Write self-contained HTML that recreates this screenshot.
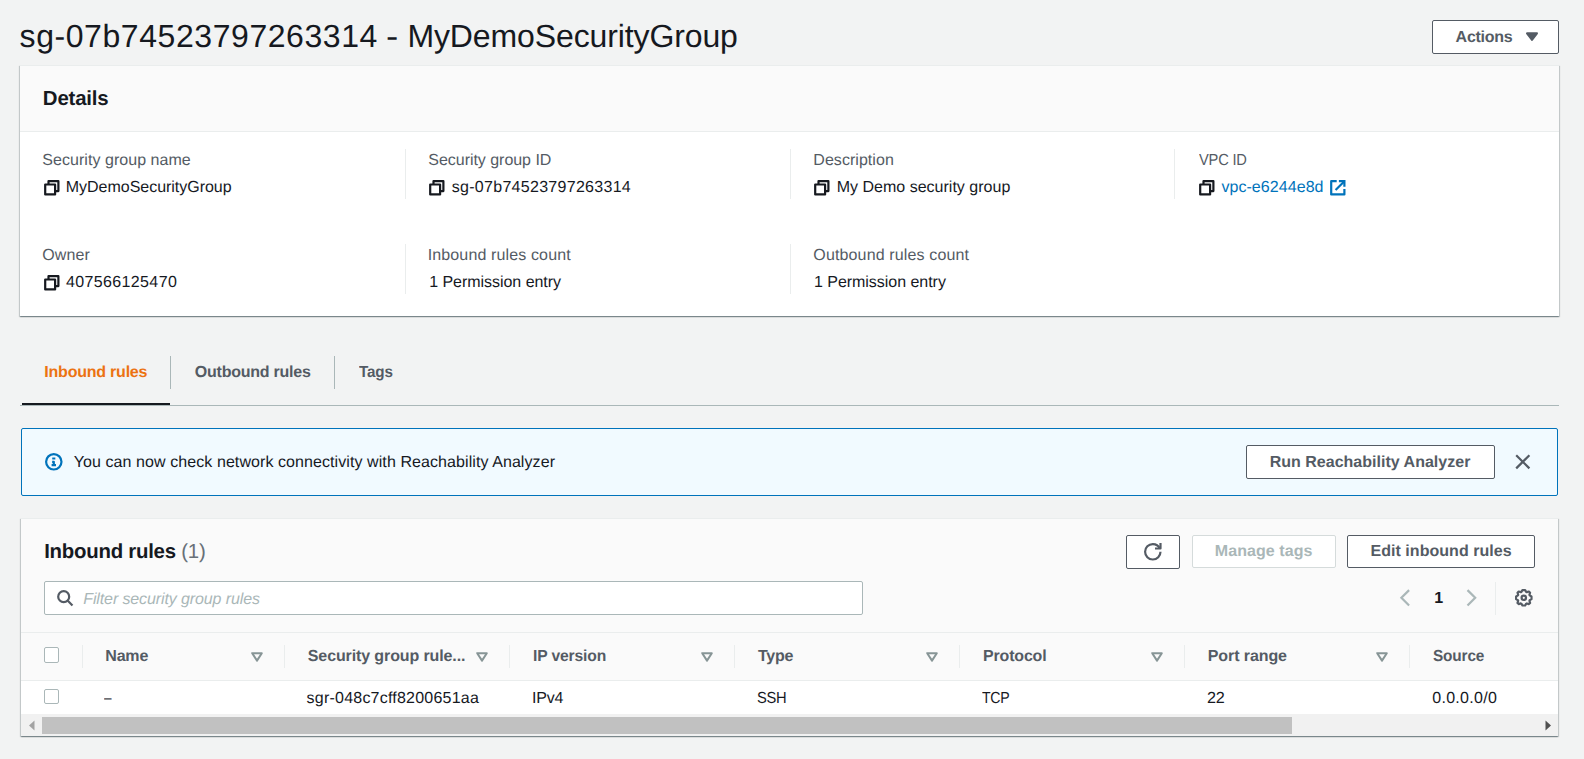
<!DOCTYPE html>
<html lang="en">
<head>
<meta charset="utf-8">
<title>sg-07b74523797263314 - MyDemoSecurityGroup</title>
<style>
*{box-sizing:border-box;margin:0;padding:0}
html,body{width:1584px;height:759px;overflow:hidden;background:#f2f3f3}
body{font-family:"Liberation Sans",sans-serif;color:#16191f;font-size:16px;position:relative;text-rendering:geometricPrecision}
.t{position:absolute;white-space:nowrap;display:block;text-decoration:none;font-size:16px;line-height:20px;height:20px;font-weight:normal;color:#16191f}
.box{position:absolute}
.card{position:absolute;background:#fff;border-top:1px solid #eaeded;box-shadow:0 1px 1px 0 rgba(0,28,36,.3),1px 1px 1px 0 rgba(0,28,36,.15),-1px 1px 1px 0 rgba(0,28,36,.15)}
.btn{position:absolute;border:1px solid #545b64;border-radius:2px;background:#fff}
.btn.dis{border-color:#d5dbdb}
.vsep{position:absolute;width:1px;background:#eaeded}
.cb{position:absolute;width:15px;height:15px;border:1px solid #aab7b8;border-radius:2px;background:#fff}
svg{position:absolute;overflow:visible}
.ic{fill:none;stroke:#16191f;stroke-width:2;stroke-linejoin:round}
</style>
</head>
<body>

<!-- ============ Page header ============ -->
<h1><span class="t" style="left:19.62px;top:18px;font-size:32px;line-height:36px;height:36px;letter-spacing:0.566px">sg-07b74523797263314</span> <span class="t" style="left:386.10px;top:18px;font-size:32px;line-height:36px;height:36px;transform:scaleX(1.150);transform-origin:0 50%">-</span> <span class="t" style="left:407.46px;top:18px;font-size:32px;line-height:36px;height:36px;letter-spacing:-0.119px">MyDemoSecurityGroup</span></h1>
<div class="btn" style="left:1432px;top:20px;width:127px;height:34px"></div>
<span class="t" style="left:1455.62px;top:28px;color:#545b64;letter-spacing:-0.282px;font-weight:bold">Actions</span>
<svg style="left:1525px;top:31px" width="14" height="12" viewBox="0 0 14 12"><path d="M2 2.3h10L7 8.9z" fill="#545b64" stroke="#545b64" stroke-width="2" stroke-linejoin="round"/></svg>

<!-- ============ Details card ============ -->
<div class="card" style="left:20px;top:65px;width:1539px;height:251px"></div>
<div class="box" style="left:20px;top:66px;width:1539px;height:66px;background:#fafafa;border-bottom:1px solid #eaeded"></div>
<h2 class="t" style="left:42.86px;top:87px;font-size:20.4px;line-height:24px;height:24px;letter-spacing:-0.194px;font-weight:bold">Details</h2>

<div class="vsep" style="left:405px;top:149px;height:50px"></div>
<div class="vsep" style="left:790px;top:149px;height:50px"></div>
<div class="vsep" style="left:1174px;top:149px;height:50px"></div>
<div class="vsep" style="left:405px;top:244px;height:50px"></div>
<div class="vsep" style="left:790px;top:244px;height:50px"></div>

<div class="t" style="left:42.30px;top:151px;color:#545b64;letter-spacing:0.046px">Security group name</div>
<div class="t" style="left:428.30px;top:151px;color:#545b64;letter-spacing:-0.035px">Security group ID</div>
<div class="t" style="left:813.30px;top:151px;color:#545b64;letter-spacing:0.047px">Description</div>
<div class="t" style="left:1198.58px;top:151px;color:#545b64;letter-spacing:-0.200px;transform:scaleX(0.916);transform-origin:0 50%">VPC ID</div>
<div class="t" style="left:42.30px;top:246px;color:#545b64;letter-spacing:0.101px">Owner</div>
<div class="t" style="left:427.70px;top:246px;color:#545b64;letter-spacing:0.134px">Inbound rules count</div>
<div class="t" style="left:813.30px;top:246px;color:#545b64;letter-spacing:0.142px">Outbound rules count</div>

<svg class="ic" style="left:43px;top:179px" width="17.6" height="17.6" viewBox="0 0 16 16"><path d="M2 5h9v9H2z"/><path d="M5 5V2h9v9h-3"/></svg>
<svg class="ic" style="left:427.8px;top:179px" width="17.6" height="17.6" viewBox="0 0 16 16"><path d="M2 5h9v9H2z"/><path d="M5 5V2h9v9h-3"/></svg>
<svg class="ic" style="left:812.6px;top:179px" width="17.6" height="17.6" viewBox="0 0 16 16"><path d="M2 5h9v9H2z"/><path d="M5 5V2h9v9h-3"/></svg>
<svg class="ic" style="left:1197.7px;top:179px" width="17.6" height="17.6" viewBox="0 0 16 16"><path d="M2 5h9v9H2z"/><path d="M5 5V2h9v9h-3"/></svg>
<svg class="ic" style="left:43px;top:274px" width="17.6" height="17.6" viewBox="0 0 16 16"><path d="M2 5h9v9H2z"/><path d="M5 5V2h9v9h-3"/></svg>

<div class="t" style="left:65.82px;top:178px;letter-spacing:-0.027px">MyDemoSecurityGroup</div>
<div class="t" style="left:451.78px;top:178px;letter-spacing:0.288px">sg-07b74523797263314</div>
<div class="t" style="left:836.66px;top:178px;letter-spacing:0.011px">My Demo security group</div>
<a class="t" style="left:1221.40px;top:178px;color:#0073bb;letter-spacing:0.062px">vpc-e6244e8d</a>
<svg style="left:1328.8px;top:179px;fill:none;stroke:#0073bb;stroke-width:2" width="17.6" height="17.6" viewBox="0 0 16 16"><path d="M10 2h4v4" stroke-linecap="square"/><path d="M6 10l8-8"/><path d="M14 9.048V14H2V2h5" stroke-linejoin="round"/></svg>
<div class="t" style="left:65.94px;top:273px;letter-spacing:0.371px">407566125470</div>
<div class="t" style="left:429.18px;top:273px;letter-spacing:-0.036px">1 Permission entry</div>
<div class="t" style="left:813.98px;top:273px;letter-spacing:-0.034px">1 Permission entry</div>

<!-- ============ Tabs ============ -->
<div class="box" style="left:20px;top:405px;width:1539px;height:1px;background:#aab7b8"></div>
<div class="box" style="left:22px;top:403px;width:148px;height:2px;background:#16191f"></div>
<div class="vsep" style="left:170px;top:356px;height:33px;background:#aab7b8"></div>
<div class="vsep" style="left:334px;top:356px;height:33px;background:#aab7b8"></div>
<a class="t" style="left:44.30px;top:363px;color:#ec7211;letter-spacing:-0.220px;font-weight:bold">Inbound rules</a>
<a class="t" style="left:194.80px;top:363px;color:#545b64;letter-spacing:-0.239px;font-weight:bold">Outbound rules</a>
<a class="t" style="left:358.58px;top:363px;color:#545b64;letter-spacing:-0.150px;font-weight:bold;transform:scaleX(0.950);transform-origin:0 50%">Tags</a>

<!-- ============ Info alert ============ -->
<div class="box" style="left:21px;top:428px;width:1537px;height:68px;background:#f1faff;border:1px solid #0073bb;border-radius:2px"></div>
<svg style="left:45.2px;top:453.3px;fill:none;stroke:#0073bb;stroke-width:2" width="17.6" height="17.6" viewBox="0 0 16 16"><circle cx="8" cy="8" r="7"/><path d="M8 11V8H6.5M6 11h4" stroke-linejoin="round"/><path d="M7.1 4.6h1.8v.8H7.1z" fill="#0073bb" stroke-width="1"/></svg>
<div class="t" style="left:73.74px;top:453px;letter-spacing:0.080px">You can now check network connectivity with Reachability Analyzer</div>
<div class="btn" style="left:1246px;top:445px;width:249px;height:34px"></div>
<span class="t" style="left:1269.66px;top:453px;color:#545b64;letter-spacing:0.015px;font-weight:bold">Run Reachability Analyzer</span>
<svg style="left:1514.2px;top:453.2px;fill:none;stroke:#545b64;stroke-width:2" width="17.6" height="17.6" viewBox="0 0 16 16"><path d="M2 2l12 12M14 2L2 14"/></svg>

<!-- ============ Inbound rules card ============ -->
<div class="card" style="left:21px;top:518px;width:1537px;height:218px;background:#fafafa"></div>
<h2 class="t" style="left:44.18px;top:540px;font-size:20.4px;line-height:24px;height:24px;letter-spacing:-0.245px;font-weight:bold">Inbound rules</h2>
<span class="t" style="left:181.34px;top:540px;font-size:20.4px;line-height:24px;height:24px;color:#687078;letter-spacing:-0.285px">(1)</span>

<div class="btn" style="left:1126px;top:535px;width:54px;height:34px"></div>
<svg style="left:1144px;top:543px;fill:none;stroke:#545b64;stroke-width:2" width="17.6" height="17.6" viewBox="0 0 16 16"><path d="M10 5h5V0" stroke-linejoin="round"/><path d="M15 8a6.957 6.957 0 01-7 7 6.957 6.957 0 01-7-7 6.957 6.957 0 017-7 6.870 6.870 0 016.3 4"/></svg>
<div class="btn dis" style="left:1192px;top:535px;width:144px;height:33px"></div>
<span class="t" style="left:1214.86px;top:542px;color:#aab7b8;letter-spacing:0.062px;font-weight:bold">Manage tags</span>
<div class="btn" style="left:1347px;top:535px;width:188px;height:33px"></div>
<span class="t" style="left:1370.50px;top:542px;color:#545b64;letter-spacing:0.039px;font-weight:bold">Edit inbound rules</span>

<div class="box" style="left:44px;top:581px;width:819px;height:34px;background:#fff;border:1px solid #aab7b8;border-radius:2px"></div>
<svg style="left:55.8px;top:589.3px;fill:none;stroke:#545b64;stroke-width:2" width="17.6" height="17.6" viewBox="0 0 16 16"><circle cx="7" cy="7" r="5"/><path d="M15 15l-4.5-4.5"/></svg>
<span class="t" style="left:83.24px;top:590px;color:#aab7b8;letter-spacing:-0.112px;font-style:italic">Filter security group rules</span>

<svg style="left:1397.3px;top:589.3px;fill:none;stroke:#aab7b8;stroke-width:2" width="17.6" height="17.6" viewBox="0 0 16 16"><path d="M11 1L4 8l7 7"/></svg>
<span class="t" style="left:1434.30px;top:589px;font-weight:bold">1</span>
<svg style="left:1461.8px;top:589.3px;fill:none;stroke:#aab7b8;stroke-width:2" width="17.6" height="17.6" viewBox="0 0 16 16"><path d="M5 1l7 7-7 7"/></svg>
<div class="vsep" style="left:1495px;top:582px;height:33px"></div>
<svg style="left:1515px;top:589px;fill:none;stroke:#545b64;stroke-width:2" width="17.6" height="17.6" viewBox="0 0 16 16"><path d="M13.33 5.792l-.213-.519.598-1.947-1.052-1.052-1.947.598-.519-.213L9.244 1H6.756l-.953 1.659-.519.213-1.947-.598-1.052 1.052.598 1.947-.213.519L1 6.756v2.488l1.659.953.213.519-.598 1.947 1.052 1.052 1.947-.598.519.213.964 1.670h2.488l.953-1.659.519-.213 1.947.598 1.052-1.052-.598-1.947.213-.519L15 9.244V6.756z" stroke-linejoin="round"/><circle cx="8" cy="8" r="2"/></svg>

<!-- table -->
<div class="box" style="left:21px;top:632px;width:1537px;height:1px;background:#eaeded"></div>
<div class="box" style="left:21px;top:680px;width:1537px;height:1px;background:#eaeded"></div>
<div class="box" style="left:21px;top:681px;width:1537px;height:33px;background:#fff"></div>
<div class="cb" style="left:44px;top:647px;height:16px"></div>
<div class="cb" style="left:44px;top:689px"></div>
<div class="vsep" style="left:82px;top:645px;height:23px"></div>
<div class="vsep" style="left:284px;top:645px;height:23px"></div>
<div class="vsep" style="left:509px;top:645px;height:23px"></div>
<div class="vsep" style="left:734px;top:645px;height:23px"></div>
<div class="vsep" style="left:959px;top:645px;height:23px"></div>
<div class="vsep" style="left:1184px;top:645px;height:23px"></div>
<div class="vsep" style="left:1409px;top:645px;height:23px"></div>
<span class="t" style="left:105.30px;top:647px;color:#545b64;letter-spacing:-0.200px;font-weight:bold">Name</span>
<span class="t" style="left:307.80px;top:647px;color:#545b64;letter-spacing:-0.114px;font-weight:bold">Security group rule...</span>
<span class="t" style="left:532.90px;top:647px;color:#545b64;letter-spacing:-0.150px;font-weight:bold;transform:scaleX(0.978);transform-origin:0 50%">IP version</span>
<span class="t" style="left:757.94px;top:647px;color:#545b64;letter-spacing:-0.219px;font-weight:bold">Type</span>
<span class="t" style="left:982.80px;top:647px;color:#545b64;letter-spacing:-0.150px;font-weight:bold;transform:scaleX(0.997);transform-origin:0 50%">Protocol</span>
<span class="t" style="left:1207.80px;top:647px;color:#545b64;letter-spacing:-0.095px;font-weight:bold">Port range</span>
<span class="t" style="left:1433.10px;top:647px;color:#545b64;letter-spacing:-0.150px;font-weight:bold;transform:scaleX(0.960);transform-origin:0 50%">Source</span>
<svg style="left:251px;top:652px" width="12" height="10" viewBox="0 0 12 10"><path d="M1.2 1.2h9.6L6 8.6z" fill="none" stroke="#879596" stroke-width="2" stroke-linejoin="round"/></svg>
<svg style="left:476px;top:652px" width="12" height="10" viewBox="0 0 12 10"><path d="M1.2 1.2h9.6L6 8.6z" fill="none" stroke="#879596" stroke-width="2" stroke-linejoin="round"/></svg>
<svg style="left:701px;top:652px" width="12" height="10" viewBox="0 0 12 10"><path d="M1.2 1.2h9.6L6 8.6z" fill="none" stroke="#879596" stroke-width="2" stroke-linejoin="round"/></svg>
<svg style="left:926px;top:652px" width="12" height="10" viewBox="0 0 12 10"><path d="M1.2 1.2h9.6L6 8.6z" fill="none" stroke="#879596" stroke-width="2" stroke-linejoin="round"/></svg>
<svg style="left:1151px;top:652px" width="12" height="10" viewBox="0 0 12 10"><path d="M1.2 1.2h9.6L6 8.6z" fill="none" stroke="#879596" stroke-width="2" stroke-linejoin="round"/></svg>
<svg style="left:1376px;top:652px" width="12" height="10" viewBox="0 0 12 10"><path d="M1.2 1.2h9.6L6 8.6z" fill="none" stroke="#879596" stroke-width="2" stroke-linejoin="round"/></svg>

<span class="t" style="left:104.38px;top:689px;transform:scaleX(0.850);transform-origin:0 50%">–</span>
<span class="t" style="left:306.62px;top:689px;letter-spacing:0.217px">sgr-048c7cff8200651aa</span>
<span class="t" style="left:531.66px;top:689px;letter-spacing:-0.150px;transform:scaleX(0.997);transform-origin:0 50%">IPv4</span>
<span class="t" style="left:756.58px;top:689px;letter-spacing:-0.300px;transform:scaleX(0.920);transform-origin:0 50%">SSH</span>
<span class="t" style="left:981.74px;top:689px;letter-spacing:-0.300px;transform:scaleX(0.880);transform-origin:0 50%">TCP</span>
<span class="t" style="left:1207.30px;top:689px;letter-spacing:-0.150px;transform:scaleX(1.012);transform-origin:0 50%">22</span>
<span class="t" style="left:1432.24px;top:689px;letter-spacing:0.285px">0.0.0.0/0</span>

<!-- horizontal scrollbar -->
<div class="box" style="left:21px;top:714px;width:1537px;height:22px;background:#f1f1f1"></div>
<div class="box" style="left:42px;top:717px;width:1250px;height:17px;background:#c1c1c1"></div>
<svg style="left:28px;top:720px" width="8" height="11" viewBox="0 0 8 11"><path d="M6.5 0.5v10L1 5.5z" fill="#a3a3a3"/></svg>
<svg style="left:1544px;top:720px" width="8" height="11" viewBox="0 0 8 11"><path d="M1.5 0.5v10L7 5.5z" fill="#505050"/></svg>

</body>
</html>
